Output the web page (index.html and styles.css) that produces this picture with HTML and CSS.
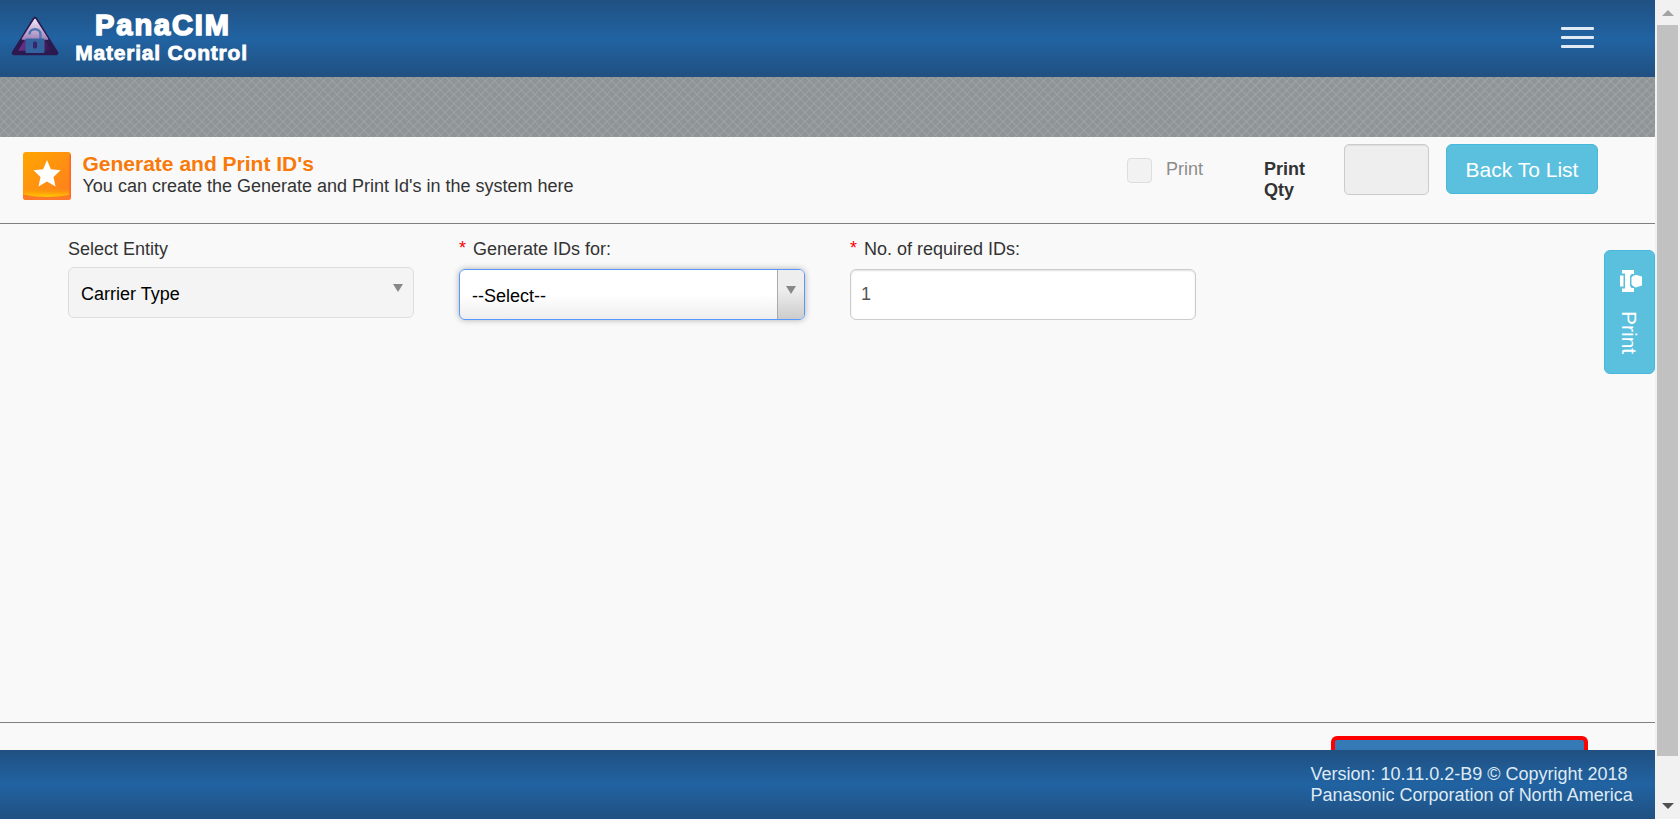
FILE: index.html
```html
<!DOCTYPE html>
<html lang="en">
<head>
<meta charset="utf-8">
<title>PanaCIM Material Control</title>
<link rel="stylesheet" href="styles.css">
</head>
<body>
<div class="app">
  <div class="page">
    <header class="topbar">
      <div class="brand">
        <svg class="brand-logo" width="48" height="40" viewBox="0 0 48 40">
          <defs>
            <linearGradient id="tri" x1="0" y1="0" x2="1" y2="0"><stop offset="0" stop-color="#6b2f8a"/><stop offset=".5" stop-color="#5b2878"/><stop offset="1" stop-color="#28103f"/></linearGradient>
            <linearGradient id="shine" x1="0" y1="0" x2="0" y2="1"><stop offset="0" stop-color="#efe6f5"/><stop offset="1" stop-color="#a184bb"/></linearGradient>
          </defs>
          <path d="M24 3 45 37H3Z" fill="url(#tri)" stroke="#2c1950" stroke-width="4.500" stroke-linejoin="round"/>
          <path d="M24 3.500 36.500 23H11.500Z" fill="url(#shine)" stroke="url(#shine)" stroke-width="1.500" stroke-linejoin="round"/>
          <path d="M18.500 18.500c0-7 11-7 11 0V23" fill="none" stroke="#5476b0" stroke-width="2.500"/>
          <rect x="14.500" y="22.500" width="19" height="14.500" rx="1" fill="#32639e"/>
          <rect x="22" y="25.500" width="4" height="7" rx="1.500" fill="#39256b"/>
        </svg>
        <div class="brand-text"><span class="brand-name">PanaCIM</span><span class="brand-sub">Material Control</span></div>
      </div>
      <div class="menu"><i></i><i></i><i></i></div>
    </header>
    <div class="band"></div>
    <section class="heading">
      <svg class="star" width="48" height="48" viewBox="0 0 48 48">
        <defs>
          <linearGradient id="org" x1="0" y1="0" x2="1" y2="1"><stop offset="0" stop-color="#ffa500"/><stop offset=".5" stop-color="#ff9210"/><stop offset="1" stop-color="#ff7a20"/></linearGradient>
          <linearGradient id="glow" x1="0" y1="0" x2="0" y2="1"><stop offset="0" stop-color="#ff9a00" stop-opacity="0"/><stop offset="1" stop-color="#ffd000"/></linearGradient>
        </defs>
        <rect width="48" height="48" rx="3" fill="url(#org)"/>
        <path d="M1 36H47V43.500Q24 46.500 1 43.500Z" fill="url(#glow)"/>
        <path d="M0 42.500Q24 47.500 48 42.500V45a3 3 0 0 1-3 3H3a3 3 0 0 1-3-3Z" fill="#ff7a28"/>
        <path d="M47.200 3V45" stroke="#ff6428" stroke-width="1.500"/>
        <path d="M24 8 27.800 17.300 37.500 18.300 30.500 25 32.500 34.500 24 29.500 15.500 34.500 17.500 25 10.500 18.300 20.200 17.300Z" fill="#fff"/>
      </svg>
      <div class="heading-text"><h1>Generate and Print ID's</h1><p>You can create the Generate and Print Id's in the system here</p></div>
      <div class="check"><span class="box"></span><span class="check-label">Print</span></div>
      <div class="qty-label">Print<br>Qty</div>
      <div class="qty"></div>
      <div class="btn">Back To List</div>
    </section>
    <main class="form">
      <div class="field"><label>Select Entity</label><div class="select disabled"><span>Carrier Type</span><span class="arrow"><svg width="10" height="8"><path d="M0 0h10L5 8z" fill="#888"/></svg></span></div></div>
      <div class="field required"><label><b>*</b>Generate IDs for:</label><div class="select active"><span>--Select--</span><span class="arrow"><svg width="10" height="8"><path d="M0 0h10L5 8z" fill="#888"/></svg></span></div></div>
      <div class="field required"><label><b>*</b>No. of required IDs:</label><div class="input">1</div></div>
    </main>
    <div class="actions"><div class="submit"></div></div>
    <footer class="footer"><div>Version: 10.11.0.2-B9 © Copyright 2018<br>Panasonic Corporation of North America</div></footer>
    <div class="side">
      <svg width="22" height="22" viewBox="0 0 22 22" fill="#fff"><path d="M2 0h12v4H11.500L10 6v10l1.500 2H14v4H2v-3.500h3v-15H2z"/><path d="M0 5.500h3.500v11H0zM13 6l2.500-1.200L22 6.500v9l-6.500 2L13 16l-1.500-1.500v-7z"/></svg>
      <span>Print</span>
    </div>
  </div>
  <div class="scroll"><svg width="12" height="6"><path d="M6 0l6 6H0z" fill="#a3a3a3"/></svg><div class="thumb"></div><svg width="12" height="6"><path d="M0 0h12L6 6z" fill="#505050"/></svg></div>
</div>
</body>
</html>
```
FILE: styles.css
```css
* { box-sizing: border-box; }
body { margin: 0; font: 18px/21px "Liberation Sans", Arial, sans-serif; color: #333; background: #f9f9f9; overflow: hidden; }
.app { display: flex; height: 819px; }
.page { position: relative; width: 1655px; display: flex; flex-direction: column; }
.topbar, .footer { background: linear-gradient(#205081, #2163a2 50%, #205081); }
.topbar { height: 77px; display: flex; justify-content: space-between; padding: 0 61px 0 11px; }
.brand { display: flex; gap: 16px; padding-top: 11px; }
.brand-logo { margin-top: 5px; }
.brand-text { display: flex; flex-direction: column; align-items: center; width: 173px; color: #fff; font-weight: bold; white-space: nowrap; }
.brand-name { padding-left: 3px; font-size: 29px; line-height: 29px; letter-spacing: 1.9px; -webkit-text-stroke: 1.6px #fff; }
.brand-sub { font-size: 21px; line-height: 25px; letter-spacing: .8px; -webkit-text-stroke: .8px #fff; }
.menu { display: flex; flex-direction: column; gap: 6px; padding-top: 27px; }
.menu i { width: 33px; height: 3px; border-radius: 1px; background: #dfeaf4; }
.band { height: 60px; background: repeating-linear-gradient(45deg, #a4a8ad70 0 2px, transparent 2px 6.364px), repeating-linear-gradient(-45deg, #a4a8ad70 0 2px, transparent 2px 6.364px), #8f9595; }
.heading { height: 87px; border-bottom: 1px solid #808080; display: flex; align-items: flex-start; padding: 7px 57px 0 23px; }
.star { margin-top: 8px; }
.heading-text { margin: 9px auto 0 11.5px; }
h1 { margin: 0; font-size: 21px; line-height: 21px; color: #f77a0b; }
p { margin: 2px 0 0; }
.check { display: flex; gap: 14px; width: 137px; padding-top: 14px; color: #8c8c8c; }
.check-label { padding-top: 1px; }
.box { width: 25px; height: 25px; border: 1px solid #ddd; border-radius: 4px; background: #f2f2f2; }
.qty-label { width: 80px; padding-top: 15px; font-weight: bold; }
.qty { width: 85px; height: 51px; margin-right: 17px; border: 1px solid #ccc; border-radius: 5px; background: #eee; box-shadow: inset 0 1px 1px #00000013; }
.btn { width: 152px; height: 50px; border: 1px solid #46b8da; border-radius: 6px; background: #5bc0de; color: #fff; font-size: 21px; line-height: 50px; text-align: center; }
.form { flex: 1; display: flex; gap: 45px; padding: 14px 68px; }
.field { width: 346px; }
label { display: block; height: 29px; line-height: 22px; }
.required label { height: 31px; }
label b { margin-right: 7px; color: red; font-weight: normal; font-size: 18px; line-height: 10px; vertical-align: 1px; }
.select, .input { height: 51px; border: 1px solid #ccc; border-radius: 6px; background: #fff; }
.select { display: flex; justify-content: space-between; padding-left: 12px; color: #000; line-height: 53px; overflow: hidden; }
.disabled { border-color: #ddd; background: #f4f4f4; }
.active { border-color: #5897fb; background: linear-gradient(#fff 50%, #eee); box-shadow: 0 0 6px #0000004d; }
.arrow { width: 28px; padding: 16px 0 0 8px; line-height: 0; }
.active .arrow { width: 27px; border-left: 1px solid #aaa; background: linear-gradient(#eee 40%, #ccc); }
.input { padding-left: 10px; line-height: 48px; color: #555; box-shadow: inset 0 1px 2px #00000020; }
.actions { height: 28px; border-top: 1px solid #808080; padding: 13px 67px 0 0; display: flex; justify-content: flex-end; }
.submit { width: 257px; border: 4px solid red; border-bottom: 0; border-radius: 6px 6px 0 0; background: #337ab7; }
.footer { height: 69px; display: flex; justify-content: flex-end; padding-top: 14px; color: #dfeaf4; }
.footer div { width: 344.5px; white-space: nowrap; }
.side { position: absolute; top: 250px; right: 0; width: 51px; height: 124px; border: 1px solid #46b8da; border-radius: 6px; background: #5bc0de; color: #fff; font-size: 21px; line-height: 22px; display: flex; flex-direction: column; align-items: flex-start; gap: 19px; padding: 19px 0 0 15px; }
.side span { margin-left: -2px; writing-mode: vertical-rl; }
.scroll { width: 25px; background: #f1f1f1; display: flex; flex-direction: column; align-items: center; padding-top: 10px; }
.thumb { width: 21px; height: 731px; margin: 9px 0 47px; background: #c1c1c1; }
```
